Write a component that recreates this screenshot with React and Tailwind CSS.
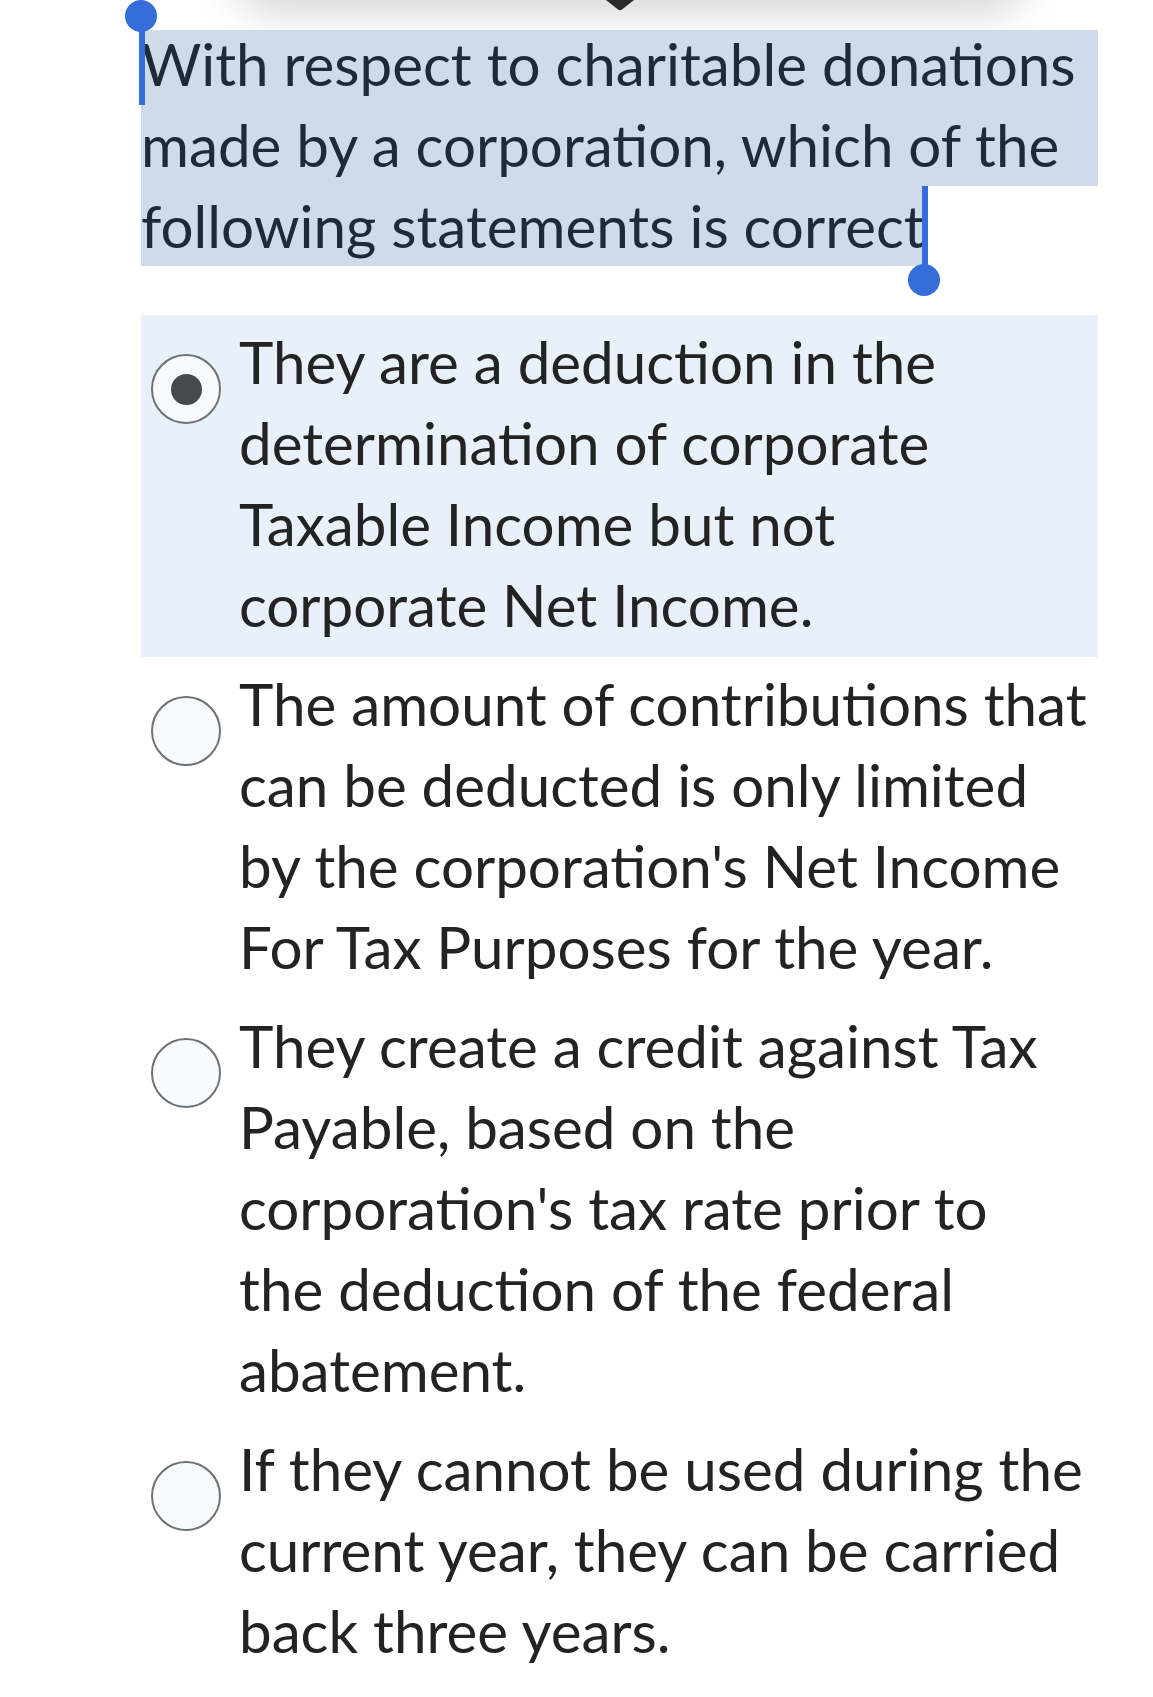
import React from "react";

const options = [
	"They are a deduction in the determination of corporate Taxable Income but not corporate Net Income.",
	"The amount of contributions that can be deducted is only limited by the corporation's Net Income For Tax Purposes for the year.",
	"They create a credit against Tax Payable, based on the corporation's tax rate prior to the\u00a0deduction of the federal abatement.",
	"If they cannot be used during the current year, they can be carried back three years.",
];

// Radio circle, filled dot when selected
const Radio = ({ checked }) => (
	<div className="ml-[10px] mt-[33px] flex h-[70px] w-[70px] shrink-0 items-center justify-center rounded-full border-2 border-[#6d7275] bg-[#f8fafd]">
		{checked && <div className="h-[31px] w-[31px] rounded-full bg-[#45484c]" />}
	</div>
);

const Option = ({ text, checked }) => (
	<div className={`flex items-start gap-[18px] pt-[6px] pb-[12px] pr-[8px] ${checked ? "bg-[#e8f0fa]" : ""}`}>
		<Radio checked={checked} />
		<p className="text-[58.3px] leading-[81px] text-[#232323]">{text}</p>
	</div>
);

const App = () => {
	return (
		<div className="relative min-h-screen overflow-hidden bg-white font-['Lato','Noto_Sans',sans-serif]">
			{/* popup menu sitting just above the viewport */}
			<div className="absolute -top-[100px] left-[250px] h-[100px] w-[760px] rounded-2xl bg-[#2b2b2b] shadow-[0_0_45px_10px_rgba(0,0,0,0.18)]" />
			<svg className="absolute left-[606px] top-0" width="28" height="11" viewBox="0 0 28 11">
				<path d="M0 0 L28 0 L16 9.5 Q14 11 12 9.5 Z" fill="#2a2a2a" />
			</svg>

			<div className="pl-[141px] pr-[55px]">
				{/* question with text selection */}
				<div className="relative pt-[23px]">
					<div className="absolute left-0 right-0 top-[30px] h-[156px] bg-[#cfdbea]" />
					<div className="absolute left-0 top-[186px] h-[80px] w-[782px] bg-[#cfdbea]" />
					<p className="relative text-[58.3px] leading-[81px] text-[#1c2a3a]">
						With respect to charitable donations made by a corporation, which of the following statements is correct
					</p>
					{/* selection handles */}
					<div className="absolute -left-[2px] top-[30px] h-[75px] w-[6px] bg-[#356ddb]" />
					<div className="absolute -left-[16px] top-0 h-[32px] w-[32px] rounded-full bg-[#356ddb]" />
					<div className="absolute left-[781px] top-[186px] h-[80px] w-[6px] bg-[#356ddb]" />
					<div className="absolute left-[767px] top-[264px] h-[32px] w-[32px] rounded-full bg-[#356ddb]" />
				</div>

				<div className="mt-[49px] flex flex-col">
					{options.map((text, i) => (
						<Option key={i} text={text} checked={i === 0} />
					))}
				</div>
			</div>
		</div>
	);
};

export default App;
